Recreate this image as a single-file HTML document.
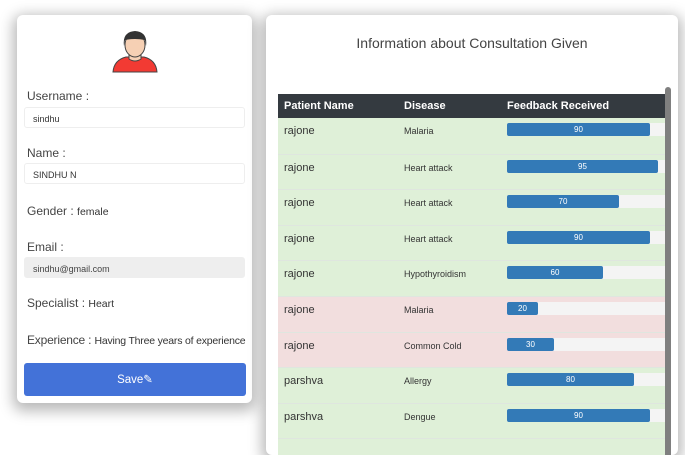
<!DOCTYPE html>
<html><head><meta charset="utf-8"><style>
*{box-sizing:border-box;margin:0;padding:0}
body{width:685px;height:440px;overflow:hidden;background:#fff;font-family:"Liberation Sans",Arial,sans-serif;position:relative}
.card{position:absolute;background:#fff;border-radius:6px;box-shadow:0 4px 14px 4px rgba(0,0,0,.28)}
#l{left:17px;top:15px;width:235px;height:388px}
#r{left:266px;top:15px;width:412px;height:440px;overflow:hidden}
.lab{position:absolute;left:10px;font-size:12px;color:#444;white-space:nowrap}
.lab b{font-weight:normal;font-size:10.5px;color:#333}
.inp{position:absolute;left:7px;width:221px;height:21px;border:1px solid #eee;border-radius:3px;font-size:9px;color:#333;padding:6px 0 0 8px}
.btn{position:absolute;left:7px;top:348px;width:222px;height:33px;background:#4372d8;border-radius:3px;color:#fff;font-size:11.5px;text-align:center;line-height:35px}
h3{position:absolute;top:20px;left:0;width:412px;text-align:center;font-weight:normal;font-size:14px;color:#444}
.tbl{position:absolute;left:12px;top:79px;width:387px;overflow:hidden}
.hd{height:24px;background:#343a40;color:#fff;font-weight:bold;font-size:11px;position:relative}
.hd span,.row span{position:absolute}
.row{height:35.6px;position:relative;border-top:1px solid #dfe6df}
.g{background:#dff0d8}.p{background:#f2dede}
.n{left:6px;top:7px;font-size:11px;color:#333}
.d{left:126px;top:8px;font-size:9px;color:#333}
.tr{left:229px;top:5px;width:160px;height:13px;background:#f4f4f4;border-radius:2px}
.bar{position:absolute;left:0;top:0;height:13px;background:#337ab7;border-radius:2px;color:#fff;font-size:8px;text-align:center;line-height:13px}
.sb{position:absolute;left:399px;top:72px;width:6px;height:380px;background:#7f7f7f;border-radius:3px}
</style></head><body>
<div class="card" id="l">
<svg style="position:absolute;left:94px;top:12px" width="48" height="46" viewBox="0 0 48 46">
<path d="M2 45 Q3 33 15 30 L33 30 Q45 33 46 45 Z" fill="#f23a33" stroke="#444" stroke-width="1"/>
<path d="M18 24 L18 32 Q24 36 30 32 L30 24 Z" fill="#f6d0b4" stroke="#444" stroke-width="1"/>
<ellipse cx="24" cy="18" rx="10" ry="12" fill="#f6d0b4" stroke="#444" stroke-width="1"/>
<path d="M13 19 Q11 5 24 4 Q37 5 35 19 L34 13 Q24 11 14 13 Z" fill="#333"/>
</svg>
<div class="lab" style="top:74px">Username :</div>
<div class="inp" style="top:92px">sindhu</div>
<div class="lab" style="top:131px">Name :</div>
<div class="inp" style="top:148px">SINDHU N</div>
<div class="lab" style="top:189px">Gender : <b>female</b></div>
<div class="lab" style="top:225px">Email :</div>
<div class="inp" style="top:242px;background:#eee;color:#444">sindhu@gmail.com</div>
<div class="lab" style="top:281px">Specialist : <b>Heart</b></div>
<div class="lab" style="top:318px;letter-spacing:-0.2px">Experience : <b>Having Three years of experience</b></div>
<div class="btn">Save&#9998;</div>
</div>
<div class="card" id="r">
<h3>Information about Consultation Given</h3>
<div class="tbl">
<div class="hd"><span style="left:6px;top:6px">Patient Name</span><span style="left:126px;top:6px">Disease</span><span style="left:229px;top:6px">Feedback Received</span></div>
<div class="row g" style="border-top:0"><span class="n">rajone</span><span class="d">Malaria</span><span class="tr"><span class="bar" style="width:143px">90</span></span></div>
<div class="row g"><span class="n">rajone</span><span class="d">Heart attack</span><span class="tr"><span class="bar" style="width:151px">95</span></span></div>
<div class="row g"><span class="n">rajone</span><span class="d">Heart attack</span><span class="tr"><span class="bar" style="width:112px">70</span></span></div>
<div class="row g"><span class="n">rajone</span><span class="d">Heart attack</span><span class="tr"><span class="bar" style="width:143px">90</span></span></div>
<div class="row g"><span class="n">rajone</span><span class="d">Hypothyroidism</span><span class="tr"><span class="bar" style="width:96px">60</span></span></div>
<div class="row p"><span class="n">rajone</span><span class="d">Malaria</span><span class="tr"><span class="bar" style="width:31px">20</span></span></div>
<div class="row p"><span class="n">rajone</span><span class="d">Common Cold</span><span class="tr"><span class="bar" style="width:47px">30</span></span></div>
<div class="row g"><span class="n">parshva</span><span class="d">Allergy</span><span class="tr"><span class="bar" style="width:127px">80</span></span></div>
<div class="row g"><span class="n">parshva</span><span class="d">Dengue</span><span class="tr"><span class="bar" style="width:143px">90</span></span></div>
<div class="row g"></div>
</div>
<div class="sb"></div>
</div>
</body></html>
